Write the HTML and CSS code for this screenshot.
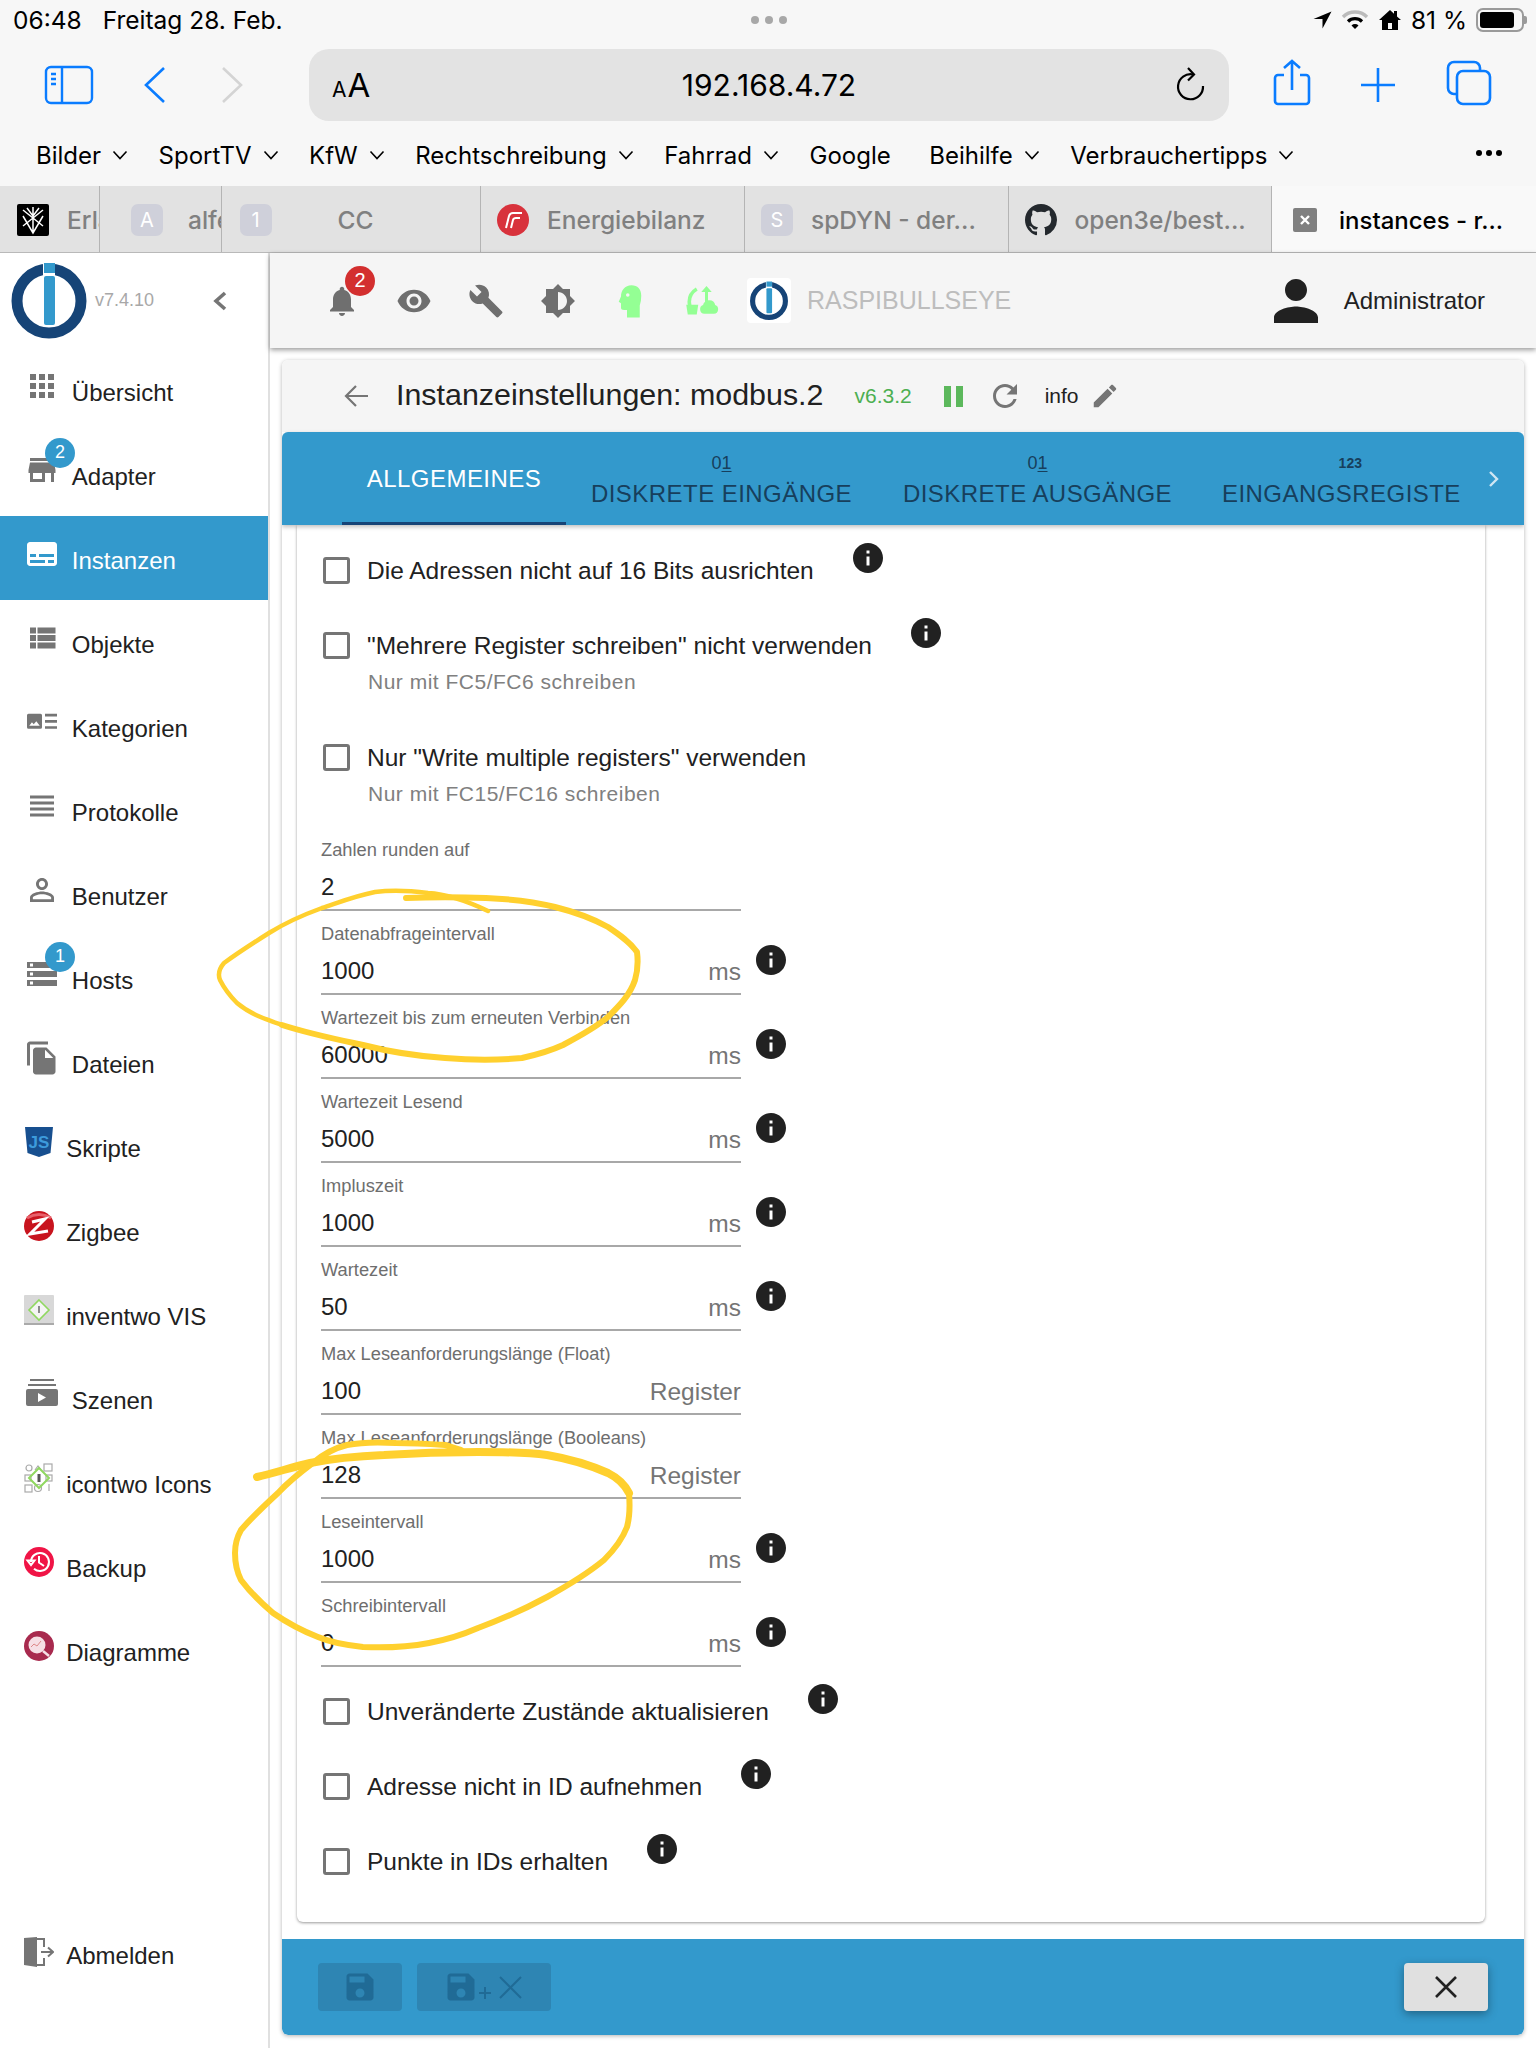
FILE: index.html
```html
<!DOCTYPE html>
<html lang="de">
<head>
<meta charset="utf-8">
<title>instances - raspibullseye</title>
<link rel="stylesheet" href="styles.css">
</head>
<body>
<svg class="defs" width="0" height="0">
  <symbol id="i-info" viewBox="0 0 24 24"><path d="M12 2C6.48 2 2 6.48 2 12s4.48 10 10 10 10-4.48 10-10S17.52 2 12 2zm1 15h-2v-6h2v6zm0-8h-2V7h2v2z"/></symbol>
  <symbol id="i-chev" viewBox="0 0 16 10"><path d="M1.5 1.5 8 8.5l6.5-7" fill="none" stroke="currentColor" stroke-width="1.6"/></symbol>
  <symbol id="i-save" viewBox="0 0 24 24"><path d="M17 3H5c-1.11 0-2 .9-2 2v14c0 1.1.89 2 2 2h14c1.1 0 2-.9 2-2V7l-4-4zm-5 16c-1.66 0-3-1.34-3-3s1.34-3 3-3 3 1.34 3 3-1.34 3-3 3zm3-10H5V5h10v4z"/></symbol>
</svg>

<header class="chrome">
  <div class="status">
    <div class="status-left"><span>06:48</span><span>Freitag 28. Feb.</span></div>
    <div class="status-dots"><i></i><i></i><i></i></div>
    <div class="status-right">
      <svg width="19" height="18" viewBox="0 0 19 18"><path d="M18.500 .5 .5 8h9v9.500z"/></svg>
      <svg width="28" height="22" viewBox="0 0 28 22"><path d="M2 8a17 17 0 0 1 24 0" fill="none" stroke="#bbb" stroke-width="3.4"/><path d="M7 12.5a10 10 0 0 1 14 0" fill="none" stroke="#000" stroke-width="3.2"/><path d="M10.5 16.5a5 5 0 0 1 7 0L14 20z"/></svg>
      <svg width="24" height="22" viewBox="0 0 24 22"><path d="M12 1 1 11h3v10h16V11h3l-4-3.6V2h-3v2.7zM10 20v-6h4v6z" fill-rule="evenodd"/></svg>
      <span class="pct">81 %</span>
      <span class="battery"><b></b></span>
    </div>
  </div>

  <div class="toolbar">
    <svg class="tb-side" width="50" height="40" viewBox="0 0 50 40" fill="none" stroke="#0a7cff" stroke-width="2.4"><rect x="2" y="2" width="46" height="36" rx="5"/><path d="M18 2v36M7 9h5M7 14h5M7 19h5"/></svg>
    <svg class="tb-back" width="24" height="38" viewBox="0 0 24 38" fill="none" stroke="#0a7cff" stroke-width="2.6"><path d="M21 2 3 19l18 17"/></svg>
    <svg class="tb-fwd" width="24" height="38" viewBox="0 0 24 38" fill="none" stroke="#d4d4d4" stroke-width="2.6"><path d="M3 2l18 17L3 36"/></svg>
    <div class="address">
      <span class="aa"><small>A</small>A</span>
      <span class="url">192.168.4.72</span>
      <svg width="32" height="38" viewBox="0 0 32 38" fill="none" stroke="#000" stroke-width="2.2"><path d="M18 8.5A12.5 12.5 0 1 0 28 20"/><path d="M13 2l6 6.5-6 6"/></svg>
    </div>
    <svg class="tb-share" width="40" height="48" viewBox="0 0 40 48" fill="none" stroke="#0a7cff" stroke-width="2.6"><path d="M12 16H6a3 3 0 0 0-3 3v23a3 3 0 0 0 3 3h28a3 3 0 0 0 3-3V19a3 3 0 0 0-3-3h-6M20 31V2M12 9l8-7 8 7"/></svg>
    <svg class="tb-plus" width="36" height="36" viewBox="0 0 36 36" fill="none" stroke="#0a7cff" stroke-width="2.6"><path d="M18 1v34M1 18h34"/></svg>
    <svg class="tb-tabs" width="46" height="46" viewBox="0 0 46 46" fill="none" stroke="#0a7cff" stroke-width="2.6"><path d="M10 34H8a6 6 0 0 1-6-6V8a6 6 0 0 1 6-6h20a6 6 0 0 1 6 6v3"/><rect x="11" y="11" width="33" height="33" rx="6"/></svg>
  </div>

  <nav class="bookmarks">
    <span class="bm">Bilder<svg class="chev"><use href="#i-chev"/></svg></span>
    <span class="bm">SportTV<svg class="chev"><use href="#i-chev"/></svg></span>
    <span class="bm">KfW<svg class="chev"><use href="#i-chev"/></svg></span>
    <span class="bm">Rechtschreibung<svg class="chev"><use href="#i-chev"/></svg></span>
    <span class="bm">Fahrrad<svg class="chev"><use href="#i-chev"/></svg></span>
    <span class="bm bm-plain">Google</span>
    <span class="bm">Beihilfe<svg class="chev"><use href="#i-chev"/></svg></span>
    <span class="bm">Verbrauchertipps<svg class="chev"><use href="#i-chev"/></svg></span>
    <span class="bm-more"><i></i><i></i><i></i></span>
  </nav>

  <div class="tabs">
    <div class="tab tab-1">
      <svg class="fav" viewBox="0 0 32 32"><rect width="32" height="32" rx="2" fill="#000"/><path d="M16 3v26M6 6l20 16M26 6 6 22M6 12l10 17 10-17M10 4l6 8 6-8" fill="none" stroke="#fff" stroke-width="1.5"/></svg>
      <span class="tab-t">Erlä</span>
    </div>
    <div class="tab tab-2"><span class="fav fav-l">A</span><span class="tab-t">alfe</span></div>
    <div class="tab tab-3"><span class="fav fav-l">1</span><span class="tab-t">CC</span></div>
    <div class="tab tab-4">
      <svg class="fav" viewBox="0 0 32 32"><circle cx="16" cy="16" r="16" fill="#d8323c"/><path d="M9 24l3-12q1-3 4-3h9M14 24l2-8q.5-2 3-2h4" fill="none" stroke="#fff" stroke-width="2"/></svg>
      <span class="tab-t">Energiebilanz</span>
    </div>
    <div class="tab tab-5"><span class="fav fav-l">S</span><span class="tab-t">spDYN - der...</span></div>
    <div class="tab tab-6">
      <svg class="fav" viewBox="0 0 16 16"><path fill="#24292e" d="M8 0C3.58 0 0 3.58 0 8c0 3.54 2.29 6.53 5.47 7.59.4.07.55-.17.55-.38 0-.19-.01-.82-.01-1.49-2.01.37-2.53-.49-2.69-.94-.09-.23-.48-.94-.82-1.13-.28-.15-.68-.52-.01-.53.63-.01 1.08.58 1.23.82.72 1.21 1.87.87 2.33.66.07-.52.28-.87.51-1.07-1.78-.2-3.64-.89-3.64-3.95 0-.87.31-1.59.82-2.15-.08-.2-.36-1.02.08-2.12 0 0 .67-.21 2.2.82.64-.18 1.32-.27 2-.27s1.36.09 2 .27c1.53-1.04 2.2-.82 2.2-.82.44 1.1.16 1.92.08 2.12.51.56.82 1.27.82 2.15 0 3.07-1.87 3.75-3.65 3.95.29.25.54.73.54 1.48 0 1.07-.01 1.93-.01 2.2 0 .21.15.46.55.38A8.01 8.01 0 0 0 16 8c0-4.42-3.58-8-8-8z"/></svg>
      <span class="tab-t">open3e/best...</span>
    </div>
    <div class="tab tab-7">
      <svg class="fav-small" viewBox="0 0 24 24"><rect width="24" height="24" rx="2" fill="#808080"/><path d="M8 8l8 8M16 8l-8 8" stroke="#fff" stroke-width="2.4"/></svg>
      <span class="tab-t">instances - r...</span>
    </div>
  </div>
</header>

<div class="app">
  <aside class="sidebar">
    <div class="brand">
      <svg width="78" height="78" viewBox="0 0 78 78"><circle cx="39" cy="39" r="32" fill="none" stroke="#164477" stroke-width="11"/><rect x="33" y="0" width="12" height="15" fill="#fff"/><rect x="34" y="1" width="11" height="10" fill="#3399cc"/><rect x="34" y="14" width="11" height="49" rx="2" fill="#3399cc"/></svg>
      <span class="ver">v7.4.10</span>
      <svg class="collapse" width="16" height="22" viewBox="0 0 16 22" fill="none" stroke="#757575" stroke-width="3.6"><path d="M13 3 4 11l9 8"/></svg>
    </div>
    <ul class="menu">
      <li class="item"><svg class="mi" viewBox="0 0 24 24"><path d="M4 8h4V4H4v4zm6 12h4v-4h-4v4zm-6 0h4v-4H4v4zm0-6h4v-4H4v4zm6 0h4v-4h-4v4zm6-10v4h4V4h-4zm-6 4h4V4h-4v4zm6 6h4v-4h-4v4zm0 6h4v-4h-4v4z"/></svg>Übersicht</li>
      <li class="item"><svg class="mi" viewBox="0 0 24 24"><path d="M20 4H4v2h16V4zm1 10v-2l-1-5H4l-1 5v2h1v6h10v-6h4v6h2v-6h1zm-9 4H6v-4h6v4z"/></svg>Adapter<span class="badge">2</span></li>
      <li class="item active"><svg class="mi" viewBox="0 0 24 24"><path d="M20 4H4c-1.1 0-2 .9-2 2v12c0 1.1.9 2 2 2h16c1.1 0 2-.9 2-2V6c0-1.1-.9-2-2-2zM4 12h4v2H4v-2zm10 6H4v-2h10v2zm6 0h-4v-2h4v2zm0-4H10v-2h10v2z"/></svg>Instanzen</li>
      <li class="item"><svg class="mi" viewBox="0 0 24 24"><path d="M4 14h4v-4H4v4zm0 5h4v-4H4v4zM4 9h4V5H4v4zm5 5h12v-4H9v4zm0 5h12v-4H9v4zM9 5v4h12V5H9z"/></svg>Objekte</li>
      <li class="item"><svg class="mi" viewBox="0 0 24 24"><path d="M2 7.500a1 1 0 0 1 1-1h8a1 1 0 0 1 1 1v8a1 1 0 0 1-1 1H3a1 1 0 0 1-1-1zM3.500 14.500h7l-2.300-3-1.700 2-1.200-1.300zM14 6.500h8v1.800h-8zM14 10.700h8v1.800h-8zM14 14.800h8v1.700h-8z" fill-rule="evenodd"/></svg>Kategorien</li>
      <li class="item"><svg class="mi" viewBox="0 0 24 24"><path d="M4 15h16v-2H4v2zm0 4h16v-2H4v2zm0-8h16V9H4v2zm0-6v2h16V5H4z"/></svg>Protokolle</li>
      <li class="item"><svg class="mi" viewBox="0 0 24 24"><path d="M12 5.900c1.160 0 2.100.94 2.100 2.100s-.94 2.100-2.100 2.100S9.900 9.160 9.900 8s.94-2.100 2.100-2.100m0 9c2.970 0 6.100 1.460 6.100 2.100v1.100H5.900V17c0-.64 3.130-2.100 6.100-2.100M12 4C9.790 4 8 5.790 8 8s1.790 4 4 4 4-1.790 4-4-1.790-4-4-4zm0 9c-2.670 0-8 1.340-8 4v3h16v-3c0-2.660-5.330-4-8-4z"/></svg>Benutzer</li>
      <li class="item"><svg class="mi" viewBox="0 0 24 24"><path d="M2 20h20v-4H2v4zm2-3h2v2H4v-2zM2 4v4h20V4H2zm4 3H4V5h2v2zm-4 7h20v-4H2v4zm2-3h2v2H4v-2z"/></svg>Hosts<span class="badge">1</span></li>
      <li class="item"><svg class="mi" viewBox="0 0 24 24"><path d="M16 1H4c-1.100 0-2 .9-2 2v14h2V3h12V1zm-1 4l6 6v10c0 1.100-.9 2-2 2H7.990C6.890 23 6 22.100 6 21l.01-14c0-1.100.89-2 1.990-2h7zm-1 7h5.500L14 6.500V12z"/></svg>Dateien</li>
      <li class="item custom"><svg class="ci" viewBox="0 0 30 30"><path d="M1 0h28l-2.500 26L15 30 3.500 26z" fill="#174f8f"/><text x="15" y="21" class="js">JS</text></svg>Skripte</li>
      <li class="item custom"><svg class="ci" viewBox="0 0 30 30"><circle cx="15" cy="15" r="15" fill="#c8141e"/><path d="M3 7q12-7 24 0" fill="none" stroke="#e8606a" stroke-width="3"/><path d="M8 11l13-3L6 23l18-3" fill="none" stroke="#fff" stroke-width="3"/></svg>Zigbee</li>
      <li class="item custom"><svg class="ci" viewBox="0 0 30 30"><rect width="30" height="30" rx="1" fill="#d8d8d8"/><rect y="28" width="30" height="2" fill="#aaa"/><path d="M15 5l10 10-10 10L5 15z" fill="#f4f4f4" stroke="#90d860" stroke-width="1.6"/><path d="M15 11v7" stroke="#444" stroke-width="1.2"/></svg>inventwo VIS</li>
      <li class="item"><svg class="mi" viewBox="0 0 36 36"><path d="M6 3h24v2H6zM4 8h28v2H4zM4 13h28a2 2 0 0 1 2 2v13a2 2 0 0 1-2 2H4a2 2 0 0 1-2-2V15a2 2 0 0 1 2-2zM14 17v9l8-4.500z" fill-rule="evenodd"/></svg>Szenen</li>
      <li class="item custom"><svg class="ci" viewBox="0 0 30 30"><g fill="none" stroke="#aaa" stroke-width="1.200"><rect x="20" y="1" width="8" height="7"/><circle cx="5" cy="5" r="3"/><path d="M11 7l3-4 3 4"/><rect x="1" y="12" width="6" height="6"/><rect x="22" y="12" width="6" height="6"/><rect x="1" y="22" width="7" height="7"/><circle cx="14" cy="25" r="3.500"/><path d="M25 21v7"/></g><path d="M15 5l10 10-10 10L5 15z" fill="none" stroke="#90d860" stroke-width="2"/><rect x="13.500" y="11" width="3" height="8" fill="#555"/></svg>icontwo Icons</li>
      <li class="item custom"><svg class="ci" viewBox="0 0 30 30"><circle cx="15" cy="15" r="15" fill="#f01446"/><path d="M7 15a9 9 0 1 1 3 6.700" fill="none" stroke="#fff" stroke-width="2"/><path d="M3.500 13.500h7L7 18zM15 9v6.500l5 3.500" fill="none" stroke="#fff" stroke-width="2"/></svg>Backup</li>
      <li class="item custom"><svg class="ci" viewBox="0 0 30 30"><circle cx="15" cy="15" r="15" fill="#a82a4e"/><circle cx="13" cy="14" r="8.500" fill="#f6dfe5"/><path d="M7 16l3-3 3 2 4-5" fill="none" stroke="#d88" stroke-width="1"/><path d="M19 20l6 5" stroke="#f6dfe5" stroke-width="2.500"/></svg>Diagramme</li>
      <li class="item custom logout"><svg class="ci" viewBox="0 0 30 30"><path d="M0 1l13-1v30L0 28z" fill="#757575"/><path d="M13 2h7v8M20 21v7h-7" fill="none" stroke="#757575" stroke-width="2"/><path d="M17 15h11M24 10.500l5 4.500-5 4.500" fill="none" stroke="#757575" stroke-width="2"/></svg>Abmelden</li>
    </ul>
  </aside>

  <div class="main">
    <div class="topbar">
      <span class="tb-ic tb-bell"><svg class="hi" viewBox="0 0 24 24"><path d="M12 22c1.100 0 2-.9 2-2h-4c0 1.100.89 2 2 2zm6-6v-5c0-3.070-1.640-5.640-4.500-6.320V4c0-.83-.67-1.500-1.500-1.500s-1.500.67-1.500 1.500v.68C7.630 5.360 6 7.920 6 11v5l-2 2v1h16v-1l-2-2z"/></svg><span class="bell-badge">2</span></span>
      <span class="tb-ic"><svg class="hi" viewBox="0 0 24 24"><path d="M12 4.500C7 4.500 2.730 7.610 1 12c1.730 4.390 6 7.500 11 7.500s9.270-3.110 11-7.500c-1.730-4.390-6-7.500-11-7.500zM12 17c-2.760 0-5-2.240-5-5s2.240-5 5-5 5 2.240 5 5-2.240 5-5 5zm0-8c-1.660 0-3 1.340-3 3s1.340 3 3 3 3-1.340 3-3-1.340-3-3-3z"/></svg></span>
      <span class="tb-ic"><svg class="hi" viewBox="0 0 24 24"><path d="M22.700 19l-9.100-9.100c.9-2.300.4-5-1.500-6.900-2-2-5-2.400-7.400-1.300L9 6 6 9 1.600 4.700C.4 7.100.9 10.100 2.900 12.100c1.900 1.900 4.600 2.400 6.900 1.500l9.100 9.100c.4.4 1 .4 1.400 0l2.300-2.300c.5-.4.5-1.100.1-1.400z"/></svg></span>
      <span class="tb-ic"><svg class="hi" viewBox="0 0 24 24"><path d="M20 15.310L23.310 12 20 8.690V4h-4.690L12 .69 8.690 4H4v4.690L.69 12 4 15.310V20h4.690L12 23.310 15.310 20H20v-4.690zM12 18V6c3.310 0 6 2.690 6 6s-2.690 6-6 6z"/></svg></span>
      <span class="tb-ic"><svg class="hi green" viewBox="0 0 24 24"><path d="M13 1.500C8.500 1.500 6 5 6 9L4.500 12.500 6 13.500V16.500Q6 18 8 18H10V23H18.500V15Q19.500 12 19.500 8.500C19.500 4 17 1.500 13 1.500z"/><circle cx="10.500" cy="8" r="1.200" fill="#f5f5f5"/></svg></span>
      <span class="tb-ic"><svg class="hi green" viewBox="0 0 24 24"><path d="M8.500 4Q3.500 7 3.500 12.500q0 3 1.500 4.500" fill="none" stroke="#94ff94" stroke-width="2.400"/><path d="M1.500 14.500h8l-1 6.500h-6zM14 13V6h-2.500L15 2l3.500 4H16v7z"/><path d="M17 11.500a4 4 0 0 1 3.800 3.200 3 3 0 0 1-.8 5.800h-6.500a3 3 0 0 1-.8-5.800A4 4 0 0 1 17 11.500z"/></svg></span>
      <span class="host-logo"><svg width="40" height="40" viewBox="0 0 78 78"><circle cx="39" cy="39" r="32" fill="none" stroke="#164477" stroke-width="10"/><rect x="33" y="0" width="12" height="15" fill="#fff"/><rect x="34" y="1" width="11" height="10" fill="#3399cc"/><rect x="34" y="14" width="11" height="49" rx="2" fill="#3399cc"/></svg></span>
      <span class="host-name">RASPIBULLSEYE</span>
      <span class="admin"><svg class="admin-ic" viewBox="0 0 24 24"><path d="M12 12c2.210 0 4-1.790 4-4s-1.790-4-4-4-4 1.790-4 4 1.790 4 4 4zm0 2c-2.670 0-8 1.340-8 4v2h16v-2c0-2.660-5.330-4-8-4z"/></svg>Administrator</span>
    </div>

    <section class="card">
      <div class="titlebar">
        <svg class="back" width="24" height="24" viewBox="0 0 24 24" fill="none" stroke="#757575" stroke-width="2.200"><path d="M24 12H2M12 2 2 12l10 10"/></svg>
        <h1 class="title">Instanzeinstellungen: modbus.2</h1>
        <span class="version">v6.3.2</span>
        <span class="pause"><i></i><i></i></span>
        <svg class="reload" viewBox="0 0 24 24"><path d="M17.650 6.350C16.200 4.900 14.210 4 12 4c-4.420 0-7.990 3.580-7.990 8s3.570 8 7.990 8c3.730 0 6.840-2.550 7.730-6h-2.080c-.82 2.330-3.040 4-5.650 4-3.310 0-6-2.690-6-6s2.690-6 6-6c1.660 0 3.140.69 4.220 1.780L13 11h7V4l-2.350 2.350z"/></svg>
        <span class="info-txt">info</span>
        <svg class="pencil" viewBox="0 0 24 24"><path d="M3 17.250V21h3.750L17.810 9.940l-3.750-3.750L3 17.250zM20.710 7.040c.39-.39.39-1.020 0-1.410l-2.340-2.340c-.39-.39-1.020-.39-1.410 0l-1.830 1.830 3.750 3.750 1.830-1.830z"/></svg>
      </div>

      <div class="tabbar">
        <div class="tabstrip">
          <div class="ctab selected">ALLGEMEINES</div>
          <div class="ctab ctab-2"><span class="ctab-ic"><span>0</span><u>1</u></span>DISKRETE EINGÄNGE</div>
          <div class="ctab ctab-3"><span class="ctab-ic"><span>0</span><u>1</u></span>DISKRETE AUSGÄNGE</div>
          <div class="ctab ctab-4"><span class="ctab-ic bold">123</span>EINGANGSREGISTER</div>
        </div>
        <svg class="more" width="12" height="18" viewBox="0 0 12 18" fill="none" stroke="#cfe6f3" stroke-width="2.400"><path d="M2 2l7 7-7 7"/></svg>
      </div>

      <div class="body">
        <form class="form">
          <div class="check h75"><span class="box"></span><span class="ctext">Die Adressen nicht auf 16 Bits ausrichten</span><svg class="info"><use href="#i-info"/></svg></div>
          <div class="check h112"><span class="box"></span><div><div class="ctext">"Mehrere Register schreiben" nicht verwenden</div><div class="helper">Nur mit FC5/FC6 schreiben</div></div><svg class="info"><use href="#i-info"/></svg></div>
          <div class="check h83"><span class="box"></span><div><div class="ctext">Nur "Write multiple registers" verwenden</div><div class="helper">Nur mit FC15/FC16 schreiben</div></div></div>

          <div class="field"><div class="fbox"><label class="flabel">Zahlen runden auf</label><div class="fline"><span>2</span></div></div></div>
          <div class="field"><div class="fbox"><label class="flabel">Datenabfrageintervall</label><div class="fline"><span>1000</span><em>ms</em></div></div><svg class="info"><use href="#i-info"/></svg></div>
          <div class="field"><div class="fbox"><label class="flabel">Wartezeit bis zum erneuten Verbinden</label><div class="fline"><span>60000</span><em>ms</em></div></div><svg class="info"><use href="#i-info"/></svg></div>
          <div class="field"><div class="fbox"><label class="flabel">Wartezeit Lesend</label><div class="fline"><span>5000</span><em>ms</em></div></div><svg class="info"><use href="#i-info"/></svg></div>
          <div class="field"><div class="fbox"><label class="flabel">Impluszeit</label><div class="fline"><span>1000</span><em>ms</em></div></div><svg class="info"><use href="#i-info"/></svg></div>
          <div class="field"><div class="fbox"><label class="flabel">Wartezeit</label><div class="fline"><span>50</span><em>ms</em></div></div><svg class="info"><use href="#i-info"/></svg></div>
          <div class="field"><div class="fbox"><label class="flabel">Max Leseanforderungslänge (Float)</label><div class="fline"><span>100</span><em>Register</em></div></div></div>
          <div class="field"><div class="fbox"><label class="flabel">Max Leseanforderungslänge (Booleans)</label><div class="fline"><span>128</span><em>Register</em></div></div></div>
          <div class="field"><div class="fbox"><label class="flabel">Leseintervall</label><div class="fline"><span>1000</span><em>ms</em></div></div><svg class="info"><use href="#i-info"/></svg></div>
          <div class="field"><div class="fbox"><label class="flabel">Schreibintervall</label><div class="fline"><span>0</span><em>ms</em></div></div><svg class="info"><use href="#i-info"/></svg></div>

          <div class="check h75 first-after"><span class="box"></span><span class="ctext">Unveränderte Zustände aktualisieren</span><svg class="info"><use href="#i-info"/></svg></div>
          <div class="check h75"><span class="box"></span><span class="ctext">Adresse nicht in ID aufnehmen</span><svg class="info"><use href="#i-info"/></svg></div>
          <div class="check h75"><span class="box"></span><span class="ctext">Punkte in IDs erhalten</span><svg class="info"><use href="#i-info"/></svg></div>
        </form>
      </div>

      <footer class="footer">
        <button class="btn off" type="button"><svg class="save"><use href="#i-save"/></svg></button>
        <button class="btn off wide" type="button"><svg class="save"><use href="#i-save"/></svg><svg class="plusx" width="46" height="30" viewBox="0 0 46 30" fill="none" stroke="#206b96" stroke-width="2"><path d="M0 21h12M6 15v12M21 5l21 21M42 5 21 26"/></svg></button>
        <button class="btn close" type="button"><svg width="24" height="24" viewBox="0 0 24 24" fill="none" stroke="#222" stroke-width="2.600"><path d="M2 2l20 20M22 2 2 22"/></svg></button>
      </footer>
    </section>
  </div>
</div>

<svg class="ink" width="1536" height="2048" viewBox="0 0 1536 2048" fill="none" stroke="#ffd02e" stroke-linecap="round" stroke-linejoin="round">
  <path stroke-width="4.500" d="M488 911C465 900 445 894 428 893C405 890 390 890 375 892C355 896 340 902 322 908C300 916 285 923 269 933C250 945 235 955 224 963C218 970 218 975 220 980C225 990 230 996 237 1003C250 1014 265 1019 282 1025"/>
  <path stroke-width="6" d="M282 1025C310 1034 335 1039 363 1045C390 1052 415 1056 445 1058C470 1060 500 1060 522 1058C540 1054 550 1051 563 1045C580 1036 595 1028 608 1017C620 1005 630 995 635 980C638 970 638 960 637 952C630 942 620 935 608 927C590 917 575 912 555 907C535 902 510 899 486 898C460 897 430 897 406 898"/>
  <path stroke-width="8" d="M257 1477C275 1473 292 1467 310 1463C335 1458 360 1456 384 1455C415 1453 445 1452 478 1452C500 1452 525 1452 547 1455C570 1459 590 1465 608 1473C618 1478 625 1485 629 1493"/>
  <path stroke-width="6" d="M629 1493C630 1505 630 1516 627 1527C622 1540 613 1551 604 1560C587 1574 567 1586 547 1597C525 1609 502 1619 478 1628C462 1635 445 1640 429 1643C408 1647 385 1648 363 1647C345 1645 332 1643 318 1637C300 1630 286 1622 273 1613C260 1602 250 1592 241 1580C236 1570 235 1562 235 1553C235 1545 237 1537 241 1530C252 1517 265 1505 278 1493C290 1480 302 1471 314 1462C325 1453 335 1448 347 1445C362 1442 380 1442 396 1443C413 1443 430 1444 445 1445C452 1447 457 1449 461 1450"/>
</svg>
</body>
</html>
```

FILE: styles.css
```css
* { box-sizing: border-box; }
html, body { margin: 0; padding: 0; }
body {
  position: relative;
  width: 1536px;
  height: 2048px;
  overflow: hidden;
  background: #fff;
  color: #212121;
  font-family: "Liberation Sans", Arial, sans-serif;
  font-size: 24px;
  display: flex;
  flex-direction: column;
}
.defs { position: absolute; }

/* browser chrome */
.chrome { background: #f7f7f7; font-family: Inter, "Liberation Sans", sans-serif; color: #000; flex: none; }
.status { height: 38px; display: grid; grid-template-columns: 1fr auto 1fr; align-items: center; padding: 2px 12px 0 13px; font-size: 24.500px; }
.status-left { display: flex; gap: 21px; }
.status-dots { display: flex; gap: 6px; }
.status-dots i { width: 8px; height: 8px; border-radius: 50%; background: #a8a8a8; }
.status-right { display: flex; justify-content: flex-end; align-items: center; gap: 9px; }
.battery { width: 48px; height: 24px; border: 2px solid #9a9a9a; border-radius: 7px; padding: 2px; display: block; position: relative; }
.battery b { display: block; width: 34px; height: 16px; background: #000; border-radius: 3px; }
.battery::after { content: ""; position: absolute; right: -5px; top: 6px; width: 3px; height: 8px; background: #9a9a9a; border-radius: 0 2px 2px 0; }

.toolbar { height: 92px; display: flex; align-items: center; padding-bottom: 0; padding-top: 2px; }
.tb-side { margin-left: 44px; }
.tb-back { margin-left: 49px; }
.tb-fwd { margin-left: 53px; }
.address { margin-left: 65px; width: 920px; height: 72px; border-radius: 20px; background: #e3e3e3; display: flex; align-items: center; padding: 0 22px 0 23px; position: relative; }
.aa { font-size: 33px; line-height: 1; }
.aa small { font-size: 21px; margin-right: 1px; }
.url { position: absolute; left: 0; right: 0; text-align: center; font-size: 30px; }
.address svg { margin-left: auto; position: relative; }
.tb-share { margin-left: 43px; margin-top: -4px; }
.tb-plus { margin-left: 48px; }
.tb-tabs { margin-left: 50px; margin-top: -4px; }

.bookmarks { height: 56px; display: flex; align-items: center; padding: 0 0 6px 36px; font-size: 24px; position: relative; }
.bm { display: flex; align-items: center; margin-right: 30.500px; white-space: nowrap; }
.bm-plain { margin-right: 38.500px; }
.chev { width: 16px; height: 10px; margin-left: 11px; color: #000; }
.bm-more { position: absolute; left: 1476px; top: 20px; display: flex; gap: 4px; }
.bm-more i { width: 6px; height: 6px; background: #000; border-radius: 50%; }

.tabs { height: 67px; display: flex; background: #e2e2e2; border-bottom: 1px solid #b9b9b9; font-weight: 500; font-size: 24.500px; color: #808080; }
.tab { display: flex; align-items: center; overflow: hidden; white-space: nowrap; border-right: 1px solid #b4b4b4; flex: none; padding-top: 2px; }
.tab-1 { width: 100px; padding-left: 17px; }
.tab-2 { width: 121.500px; padding-left: 31px; }
.tab-3 { width: 259.500px; padding-left: 18px; }
.tab-4 { width: 264px; padding-left: 16px; }
.tab-5 { width: 263.500px; padding-left: 16px; }
.tab-6 { width: 263.500px; padding-left: 16px; }
.tab-7 { flex: 1; padding-left: 21px; background: #f9f9f9; color: #000; border-right: 0; font-size: 24px; }
.fav { width: 32px; height: 32px; flex: none; margin-right: 18px; }
.fav-l { background: #cfd0da; border-radius: 7px; color: #fff; font-size: 20px; text-align: center; line-height: 32px; font-weight: 400; }
.tab-3 .fav-l { margin-right: 66px; }
.tab-2 .fav-l { margin-right: 25px; }
.fav-small { width: 24px; height: 24px; margin-right: 22px; flex: none; }

/* app */
.app { flex: 1; display: flex; min-height: 0; }
.sidebar { width: 270px; flex: none; border-right: 2px solid #e0e0e0; display: flex; flex-direction: column; background: #fff; }
.brand { height: 95px; flex: none; display: flex; align-items: center; padding-left: 10px; }
.ver { font-size: 18px; color: #a8a8a8; margin-left: 7px; }
.collapse { margin-left: 58px; }
.menu { list-style: none; margin: 0; padding: 0 0 50px; flex: 1; display: flex; flex-direction: column; }
.item { height: 84px; flex: none; display: flex; align-items: center; padding: 5px 0 0 24px; position: relative; gap: 11.800px; color: #212121; }
.mi { width: 36px; height: 36px; fill: #757575; margin-bottom: 13px; flex: none; }
.ci { width: 30px; height: 30px; margin-bottom: 13px; flex: none; }
.js { font: bold 17px "Liberation Sans", sans-serif; fill: #3d9bdc; text-anchor: middle; }
.item.custom { gap: 12.200px; }
.item.active { background: #3399cc; color: #fff; }
.item.active .mi { fill: #fff; }
.logout { margin-top: auto; padding-top: 0; }
.logout .ci { margin-bottom: 8px; }
.badge { position: absolute; left: 45px; top: 6px; width: 30px; height: 30px; border-radius: 50%; background: #3399cc; color: #fff; font-size: 18px; line-height: 28px; text-align: center; }

.main { flex: 1; min-width: 0; display: flex; flex-direction: column; }
.topbar { height: 95px; flex: none; background: #f5f5f5; display: flex; align-items: center; padding-left: 36px; box-shadow: 0 2px 5px rgba(0,0,0,.4); position: relative; z-index: 2; }
.tb-ic { width: 72px; height: 36px; display: flex; justify-content: center; position: relative; }
.hi { width: 36px; height: 36px; fill: #6f6f6f; }
.hi.green { fill: #94ff94; }
.bell-badge { position: absolute; left: 39px; top: -17px; width: 30px; height: 30px; background: #d32f2f; color: #fff; border-radius: 50%; text-align: center; font-size: 20px; line-height: 29px; }
.host-logo { width: 44px; height: 45px; margin-left: 9px; background: #fff; border-radius: 4px; display: flex; align-items: center; justify-content: center; }
.host-name { margin-left: 16px; font-size: 25px; color: #bdbdbd; }
.admin { margin-left: auto; padding-right: 51px; display: flex; align-items: center; color: #212121; }
.admin-ic { width: 66px; height: 66px; fill: #212121; margin-right: 15px; }

.card { margin: 12px 12px 13px 12px; flex: 1; min-height: 0; border-radius: 6px; background: #fff; box-shadow: 0 1px 4px rgba(0,0,0,.3); display: flex; flex-direction: column; overflow: hidden; }
.titlebar { height: 72px; flex: none; background: #f5f5f5; display: flex; align-items: center; padding-left: 62px; }
.title { margin: 0 0 4px 28px; font-size: 30.400px; font-weight: 400; white-space: nowrap; color: #212121; }
.version { margin-left: 31px; font-size: 21px; color: #4caf50; }
.pause { margin-left: 32px; display: flex; gap: 5px; }
.pause i { width: 7px; height: 21px; background: #5cb85c; }
.reload { width: 36px; height: 36px; fill: #757575; margin-left: 24px; }
.info-txt { margin-left: 22px; font-size: 21px; color: #212121; }
.pencil { width: 30px; height: 30px; fill: #757575; margin-left: 11px; }

.tabbar { height: 93px; flex: none; background: #3399cc; display: flex; align-items: stretch; padding-left: 60px; border-radius: 6px 6px 0 0; position: relative; z-index: 1; box-shadow: 0 2px 4px rgba(0,0,0,.25); }
.tabstrip { width: 1120px; display: flex; overflow: hidden; }
.ctab { flex: none; padding: 20px 24px 0; height: 93px; text-align: center; white-space: nowrap; letter-spacing: .45px; color: #173f5c; display: flex; flex-direction: column; align-items: center; line-height: 28px; }
.ctab-ic { font-size: 18px; line-height: 22px; letter-spacing: 0; margin-bottom: 4px; height: 24px; }
.ctab-ic u { text-underline-offset: 2px; }
.ctab-ic.bold { font-weight: 700; font-size: 14px; }
.ctab.selected { width: 224px; color: #fff; padding-top: 33px; border-bottom: 3px solid #164477; }
.ctab-2 { width: 311px; }
.ctab-3 { width: 321px; }
.more { align-self: center; margin-left: 26px; }

.body { flex: 1; min-height: 0; padding: 0 39px 17px 15px; }
.form { height: 100%; padding: 32px 0 0 24px; border-radius: 0 0 6px 6px; box-shadow: 0 1px 3px rgba(0,0,0,.4); background: #fff; }
.check { display: flex; align-items: flex-start; }
.h75 { height: 75px; }
.h112 { height: 112px; }
.h83 { height: 83px; }
.first-after { margin-top: 31px; }
.box { width: 27px; height: 27px; flex: none; border: 3px solid #757575; border-radius: 3px; margin: 0 17px 0 2px; }
.ctext { font-size: 24.500px; line-height: 28px; white-space: nowrap; color: #212121; }
.helper { font-size: 21px; letter-spacing: .5px; color: #808080; line-height: 28px; margin: 8px 0 0 1px; }
.info { width: 36px; height: 36px; fill: #212121; margin: -17px 0 0 36px; flex: none; }
.field { height: 84px; display: flex; align-items: flex-start; }
.fbox { width: 420px; height: 84px; display: flex; flex-direction: column; }
.flabel { font-size: 18.300px; line-height: 24px; margin-top: 11px; color: #6e6e6e; white-space: nowrap; }
.fline { height: 49px; border-bottom: 2px solid #a8a8a8; display: flex; justify-content: space-between; align-items: center; padding-top: 2px; }
.fline em { font-style: normal; font-size: 24.500px; color: #757575; padding-top: 3px; }
.field .info { margin: 31px 0 0 12px; }

.footer { height: 96px; flex: none; background: #3399cc; display: flex; align-items: center; padding: 0 36px; gap: 15px; border-radius: 0 0 6px 6px; }
.btn { height: 48px; border: 0; border-radius: 4px; padding: 0; display: flex; align-items: center; justify-content: center; }
.btn.off { width: 84px; background: #2e85b3; }
.btn.wide { width: 134px; }
.save { width: 36px; height: 36px; fill: #206b96; }
.btn.close { width: 84px; margin-left: auto; background: #e0e0e0; box-shadow: 0 3px 10px rgba(0,0,0,.35); }

.ink { position: absolute; left: 0; top: 0; pointer-events: none; z-index: 5; }
```
